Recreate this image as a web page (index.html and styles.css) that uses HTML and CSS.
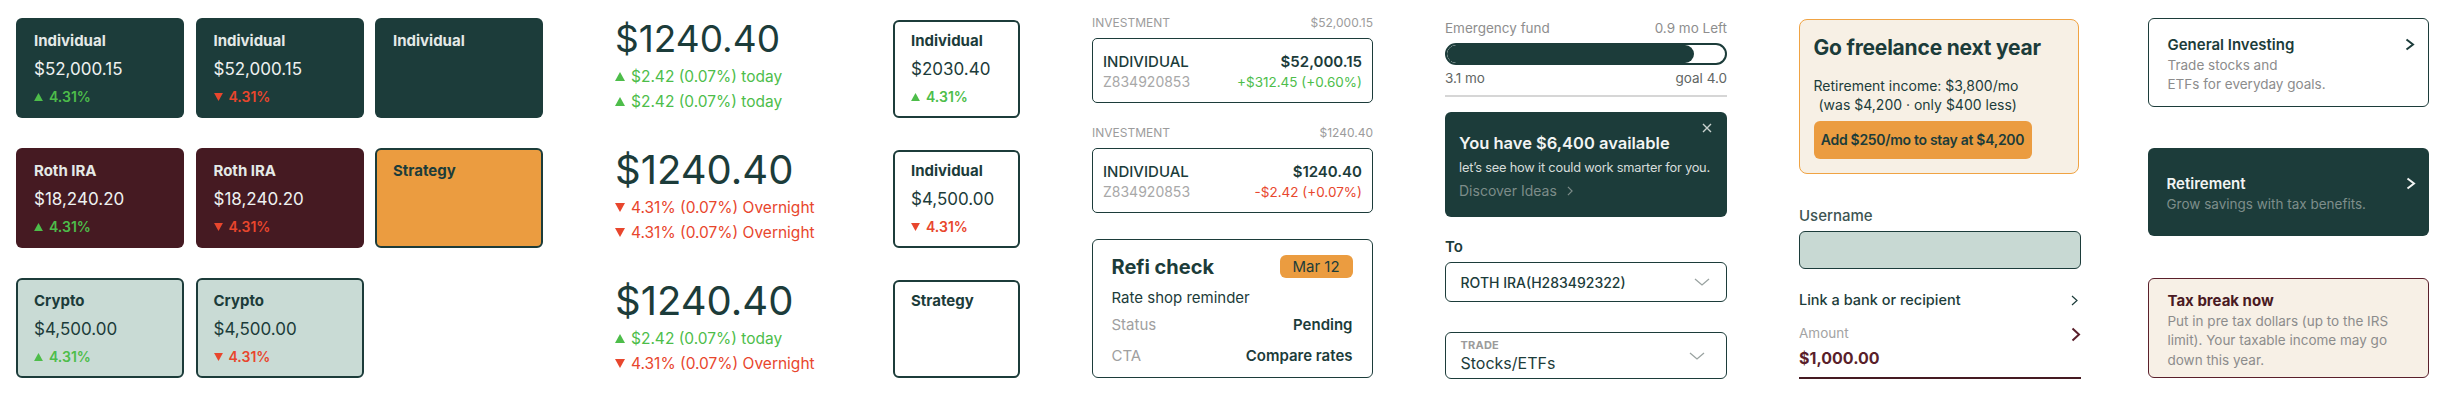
FILE: index.html
```html
<!DOCTYPE html>
<html lang="en">
<head>
<meta charset="utf-8">
<title>Finance UI components</title>
<link rel="stylesheet" href="styles.css">
</head>
<body>
<div class="page">

  <!-- Column 1: account tiles -->
  <section class="tiles">
    <div class="tile tile-dark">
      <div class="tile-title">Individual</div>
      <div class="tile-amount">$52,000.15</div>
      <div class="tile-change up"><svg class="tri" viewBox="0 0 10 9"><polygon points="5,0 10,9 0,9"/></svg>4.31%</div>
    </div>
    <div class="tile tile-dark">
      <div class="tile-title">Individual</div>
      <div class="tile-amount">$52,000.15</div>
      <div class="tile-change down"><svg class="tri" viewBox="0 0 10 9"><polygon points="0,0 10,0 5,9"/></svg>4.31%</div>
    </div>
    <div class="tile tile-dark">
      <div class="tile-title">Individual</div>
    </div>

    <div class="tile tile-maroon">
      <div class="tile-title">Roth IRA</div>
      <div class="tile-amount">$18,240.20</div>
      <div class="tile-change up"><svg class="tri" viewBox="0 0 10 9"><polygon points="5,0 10,9 0,9"/></svg>4.31%</div>
    </div>
    <div class="tile tile-maroon">
      <div class="tile-title">Roth IRA</div>
      <div class="tile-amount">$18,240.20</div>
      <div class="tile-change down"><svg class="tri" viewBox="0 0 10 9"><polygon points="0,0 10,0 5,9"/></svg>4.31%</div>
    </div>
    <div class="tile tile-orange">
      <div class="tile-title">Strategy</div>
    </div>

    <div class="tile tile-light">
      <div class="tile-title">Crypto</div>
      <div class="tile-amount">$4,500.00</div>
      <div class="tile-change up"><svg class="tri" viewBox="0 0 10 9"><polygon points="5,0 10,9 0,9"/></svg>4.31%</div>
    </div>
    <div class="tile tile-light">
      <div class="tile-title">Crypto</div>
      <div class="tile-amount">$4,500.00</div>
      <div class="tile-change down"><svg class="tri" viewBox="0 0 10 9"><polygon points="0,0 10,0 5,9"/></svg>4.31%</div>
    </div>
  </section>

  <!-- Column 2: big prices -->
  <section class="prices">
    <div class="price-block">
      <div class="price">$1240.40</div>
      <div class="sub up"><svg class="tri-lg" viewBox="0 0 10 9"><polygon points="5,0 10,9 0,9"/></svg>$2.42 (0.07%) today</div>
      <div class="sub up"><svg class="tri-lg" viewBox="0 0 10 9"><polygon points="5,0 10,9 0,9"/></svg>$2.42 (0.07%) today</div>
    </div>
    <div class="price-block">
      <div class="price price-lg">$1240.40</div>
      <div class="sub down"><svg class="tri-lg" viewBox="0 0 10 9"><polygon points="0,0 10,0 5,9"/></svg>4.31% (0.07%) Overnight</div>
      <div class="sub down"><svg class="tri-lg" viewBox="0 0 10 9"><polygon points="0,0 10,0 5,9"/></svg>4.31% (0.07%) Overnight</div>
    </div>
    <div class="price-block">
      <div class="price price-lg">$1240.40</div>
      <div class="sub up"><svg class="tri-lg" viewBox="0 0 10 9"><polygon points="5,0 10,9 0,9"/></svg>$2.42 (0.07%) today</div>
      <div class="sub down"><svg class="tri-lg" viewBox="0 0 10 9"><polygon points="0,0 10,0 5,9"/></svg>4.31% (0.07%) Overnight</div>
    </div>
  </section>

  <!-- Column 3: outline tiles -->
  <section class="otiles">
    <div class="otile">
      <div class="tile-title">Individual</div>
      <div class="tile-amount">$2030.40</div>
      <div class="tile-change up"><svg class="tri" viewBox="0 0 10 9"><polygon points="5,0 10,9 0,9"/></svg>4.31%</div>
    </div>
    <div class="otile">
      <div class="tile-title">Individual</div>
      <div class="tile-amount">$4,500.00</div>
      <div class="tile-change down"><svg class="tri" viewBox="0 0 10 9"><polygon points="0,0 10,0 5,9"/></svg>4.31%</div>
    </div>
    <div class="otile">
      <div class="tile-title">Strategy</div>
    </div>
  </section>

  <!-- Column 4: investment rows + refi card -->
  <section class="invest">
    <div class="inv-label"><span>INVESTMENT</span><span>$52,000.15</span></div>
    <div class="inv-card">
      <div class="inv-left">
        <div class="inv-name">INDIVIDUAL</div>
        <div class="inv-id">Z834920853</div>
      </div>
      <div class="inv-right">
        <div class="inv-amount">$52,000.15</div>
        <div class="inv-change up">+$312.45 (+0.60%)</div>
      </div>
    </div>
    <div class="inv-label second"><span>INVESTMENT</span><span>$1240.40</span></div>
    <div class="inv-card">
      <div class="inv-left">
        <div class="inv-name">INDIVIDUAL</div>
        <div class="inv-id">Z834920853</div>
      </div>
      <div class="inv-right">
        <div class="inv-amount">$1240.40</div>
        <div class="inv-change down">-$2.42 (+0.07%)</div>
      </div>
    </div>
    <div class="refi">
      <div class="refi-head">
        <span class="refi-title">Refi check</span>
        <span class="badge">Mar 12</span>
      </div>
      <div class="refi-row refi-desc">Rate shop reminder</div>
      <div class="refi-row refi-status"><span class="muted">Status</span><strong>Pending</strong></div>
      <div class="refi-row refi-cta"><span class="muted">CTA</span><strong>Compare rates</strong></div>
    </div>
  </section>

  <!-- Column 5: emergency fund, promo, selects -->
  <section class="fund">
    <div class="fund-row"><span>Emergency fund</span><span>0.9 mo Left</span></div>
    <div class="bar"><div class="bar-fill" style="width: 89%"></div></div>
    <div class="fund-row fund-scale"><span>3.1 mo</span><span>goal 4.0</span></div>
    <div class="divider"></div>
    <div class="promo">
      <svg class="close" viewBox="0 0 10 10"><path d="M1 1L9 9M9 1L1 9"/></svg>
      <div class="promo-title">You have $6,400 available</div>
      <div class="promo-sub">let’s see how it could work smarter for you.</div>
      <div class="promo-link">Discover Ideas <svg class="link-chev" viewBox="0 0 7 12"><path d="M1 1L6 6L1 11"/></svg></div>
    </div>
    <div class="to-label">To</div>
    <div class="select">
      <span class="select-value">ROTH IRA(H283492322)</span>
      <svg class="chev-down" viewBox="0 0 16 8"><path d="M1 1L8 7L15 1"/></svg>
    </div>
    <div class="select select-trade">
      <div class="select-stack">
        <span class="select-cap">TRADE</span>
        <span class="select-big">Stocks/ETFs</span>
      </div>
      <svg class="chev-down" viewBox="0 0 16 8"><path d="M1 1L8 7L15 1"/></svg>
    </div>
  </section>

  <!-- Column 6: freelance + form -->
  <section class="form-col">
    <div class="freelance">
      <div class="fl-title">Go freelance next year</div>
      <div class="fl-line fl-first">Retirement income: $3,800/mo</div>
      <div class="fl-line fl-indent">(was $4,200 · only $400 less)</div>
      <div class="fl-btn">Add $250/mo to stay at $4,200</div>
    </div>
    <div class="field-label">Username</div>
    <div class="input"></div>
    <div class="link-row"><span>Link a bank or recipient</span><svg class="chev-sm" viewBox="0 0 7 11"><path d="M1 1L6 5.5L1 10"/></svg></div>
    <div class="amount">
      <div class="amount-text">
        <div class="amount-label">Amount</div>
        <div class="amount-value">$1,000.00</div>
      </div>
      <svg class="chev-amount" viewBox="0 0 10 15"><path d="M1.5 1.5L8 7.5L1.5 13.5"/></svg>
    </div>
  </section>

  <!-- Column 7: option cards -->
  <section class="options">
    <div class="opt opt-white">
      <div class="opt-head"><span class="opt-title">General Investing</span><svg class="opt-chev" viewBox="0 0 10 13"><path d="M1.5 1.5L8 6.5L1.5 11.5"/></svg></div>
      <div class="opt-desc">Trade stocks and<br>ETFs for everyday goals.</div>
    </div>
    <div class="opt opt-dark">
      <div class="opt-head"><span class="opt-title">Retirement</span><svg class="opt-chev" viewBox="0 0 10 13"><path d="M1.5 1.5L8 6.5L1.5 11.5"/></svg></div>
      <div class="opt-desc">Grow savings with tax benefits.</div>
    </div>
    <div class="opt opt-tax">
      <div class="opt-head"><span class="opt-title">Tax break now</span></div>
      <div class="opt-desc">Put in pre tax dollars (up to the IRS limit). Your taxable income may go down this year.</div>
    </div>
  </section>

</div>
</body>
</html>
```

FILE: styles.css
```css
* { box-sizing: border-box; }

body {
  margin: 0;
  background: #ffffff;
  font-family: Inter, "Noto Sans", "Liberation Sans", sans-serif;
  color: #1c3c3a;
}

.page {
  display: flex;
  align-items: flex-start;
  gap: 72px;
  padding-left: 16px;
  width: 2458px;
  height: 408px;
}

.up { color: #4dbd4a; }
.down { color: #e8462d; }

/* ---------- Column 1: tiles ---------- */
.tiles {
  flex: none;
  width: 527px;
  margin-top: 18px;
  display: grid;
  grid-template-columns: repeat(3, 168px);
  column-gap: 11.5px;
  grid-auto-rows: 100px;
  row-gap: 30px;
}

.tile {
  border-radius: 6px;
  padding: 9px 0 0 18px;
}

.tile-title {
  font-size: 15px;
  font-weight: 700;
  line-height: 28px;
}

.tile-amount {
  font-size: 17px;
  line-height: 28px;
}

.tile-change {
  display: flex;
  align-items: center;
  gap: 6px;
  font-size: 14px;
  font-weight: 600;
  line-height: 28px;
}

.tri {
  width: 9px;
  height: 8px;
  fill: currentColor;
}

.tile-dark { background: #1c3c3a; }
.tile-maroon { background: #451a22; }
.tile-dark .tile-title,
.tile-maroon .tile-title { color: #e4e9e7; }
.tile-dark .tile-amount,
.tile-maroon .tile-amount { color: #eef1f0; }

.tile-light {
  background: #c9dbd5;
  border: 2px solid #1c3c3a;
  padding: 7px 0 0 16px;
}

.tile-orange {
  background: #eb9c40;
  border: 2px solid #1c3c3a;
  padding: 7px 0 0 16px;
}

/* ---------- Column 2: prices ---------- */
.prices {
  flex: none;
  width: 206px;
  margin-top: 16px;
  display: flex;
  flex-direction: column;
  gap: 33px;
}

.price {
  font-size: 37px;
  line-height: 46px;
  margin-bottom: 2px;
  white-space: nowrap;
}

.price-lg { font-size: 40px; }

.sub {
  display: flex;
  align-items: center;
  gap: 6px;
  font-size: 15.5px;
  line-height: 25px;
  white-space: nowrap;
}

.tri-lg {
  width: 10px;
  height: 9px;
  fill: currentColor;
}

/* ---------- Column 3: outline tiles ---------- */
.otiles {
  flex: none;
  width: 127px;
  margin-top: 20px;
  display: flex;
  flex-direction: column;
  gap: 32px;
}

.otile {
  height: 98px;
  border: 2px solid #1c3c3a;
  border-radius: 6px;
  padding: 5px 0 0 16px;
}

/* ---------- Column 4: investments ---------- */
.invest {
  flex: none;
  width: 281px;
  padding-top: 14px;
}

.inv-label {
  display: flex;
  justify-content: space-between;
  font-size: 12px;
  line-height: 18px;
  color: #9c9c9c;
}

.inv-label.second { margin-top: 21px; }

.inv-card {
  margin-top: 6px;
  height: 65px;
  border: 1.5px solid #1c3c3a;
  border-radius: 5px;
  padding: 12.5px 10px 0 10px;
  display: flex;
  justify-content: space-between;
}

.inv-name {
  font-size: 15px;
  font-weight: 500;
  line-height: 20px;
}

.inv-id {
  font-size: 14px;
  line-height: 20px;
  color: #a8a8a8;
}

.inv-right { text-align: right; }

.inv-amount {
  font-size: 15px;
  font-weight: 600;
  line-height: 20px;
}

.inv-change {
  font-size: 13.5px;
  line-height: 20px;
}

.refi {
  margin-top: 26px;
  height: 139px;
  border: 1.5px solid #1c3c3a;
  border-radius: 6px;
  padding: 12.5px 19.5px 0 18.5px;
}

.refi-head {
  display: flex;
  justify-content: space-between;
  align-items: center;
  height: 28px;
}

.refi-title {
  font-size: 20px;
  font-weight: 700;
}

.badge {
  background: #eb9c40;
  border-radius: 6px;
  font-size: 15px;
  line-height: 23px;
  padding: 0 10px;
  width: 73px;
  text-align: center;
  color: #1c3c3a;
}

.refi-row {
  display: flex;
  justify-content: space-between;
  font-size: 15px;
  line-height: 24px;
}

.refi-desc { margin-top: 5px; }
.refi-status { margin-top: 3px; }
.refi-cta { margin-top: 7px; }

.refi-row strong { font-weight: 600; }
.muted { color: #a0a0a0; }

/* ---------- Column 5: fund ---------- */
.fund {
  flex: none;
  width: 282px;
  padding-top: 19px;
}

.fund-row {
  display: flex;
  justify-content: space-between;
  font-size: 13.5px;
  line-height: 18px;
  color: #8e8e8e;
}

.bar {
  margin-top: 6px;
  height: 22px;
  border: 2px solid #1c3c3a;
  border-radius: 11px;
  background: #ffffff;
  overflow: hidden;
}

.bar-fill {
  height: 100%;
  background: #1c3c3a;
  border-radius: 10px;
}

.fund-scale {
  margin-top: 4px;
  color: #5f6664;
}

.divider {
  margin-top: 8px;
  height: 2px;
  background: #d6d6d6;
}

.promo {
  position: relative;
  margin-top: 15px;
  height: 105px;
  background: #1c3c3a;
  border-radius: 6px;
  padding: 20px 14px 0 14px;
}

.close {
  position: absolute;
  top: 11px;
  right: 15px;
  width: 10px;
  height: 10px;
  stroke: #c9d2cf;
  stroke-width: 1.4;
  fill: none;
}

.promo-title {
  font-size: 16.5px;
  font-weight: 600;
  line-height: 22px;
  color: #f2f4f3;
}

.promo-sub {
  margin-top: 4px;
  font-size: 12.8px;
  letter-spacing: -0.2px;
  line-height: 20px;
  color: #d6dddb;
  white-space: nowrap;
}

.promo-link {
  margin-top: 3px;
  display: flex;
  align-items: center;
  gap: 10px;
  font-size: 14px;
  line-height: 20px;
  color: #7d8c89;
}

.link-chev {
  width: 6px;
  height: 10px;
  stroke: #7d8c89;
  stroke-width: 1.4;
  fill: none;
}

.to-label {
  margin-top: 20px;
  font-size: 15px;
  font-weight: 600;
  line-height: 20px;
}

.select {
  margin-top: 5px;
  height: 40px;
  border: 1.5px solid #1c3c3a;
  border-radius: 6px;
  padding: 0 16px 0 14.5px;
  display: flex;
  align-items: center;
  justify-content: space-between;
}

.select-value {
  font-size: 14px;
  font-weight: 500;
}

.chev-down {
  width: 16px;
  height: 8px;
  stroke: #9aa3a1;
  stroke-width: 1.3;
  fill: none;
}

.select-trade {
  margin-top: 30px;
  height: 47px;
  padding-right: 21px;
}

.select-stack {
  display: flex;
  flex-direction: column;
}

.select-cap {
  font-size: 11px;
  font-weight: 700;
  line-height: 14px;
  color: #9b9b9b;
  letter-spacing: 0.2px;
}

.select-big {
  font-size: 16px;
  line-height: 22px;
}

/* ---------- Column 6: form ---------- */
.form-col {
  flex: none;
  width: 282px;
  padding-top: 19px;
}

.freelance {
  width: 280px;
  height: 155px;
  background: #f7f0e5;
  border: 1.5px solid #f0a343;
  border-radius: 8px;
  padding: 13.5px 14px 0 13.5px;
}

.fl-title {
  font-size: 21px;
  font-weight: 700;
  line-height: 28px;
  letter-spacing: -0.2px;
}

.fl-line {
  font-size: 14px;
  line-height: 19px;
}

.fl-first { margin-top: 14.5px; }
.fl-indent { padding-left: 5px; }

.fl-btn {
  margin-top: 6.5px;
  height: 38px;
  width: 218px;
  background: #eb9c40;
  border-radius: 6px;
  font-size: 14px;
  font-weight: 600;
  letter-spacing: -0.3px;
  line-height: 38px;
  text-align: center;
  white-space: nowrap;
}

.field-label {
  margin-top: 33px;
  font-size: 15px;
  font-weight: 500;
  line-height: 18px;
  color: #3d5452;
}

.input {
  margin-top: 6px;
  height: 38px;
  background: #c8d9d3;
  border: 1.5px solid #1c3c3a;
  border-radius: 6px;
}

.link-row {
  margin-top: 21px;
  display: flex;
  justify-content: space-between;
  align-items: center;
  font-size: 14.5px;
  font-weight: 500;
  line-height: 20px;
  padding-right: 3px;
}

.chev-sm {
  width: 7px;
  height: 11px;
  stroke: #1c3c3a;
  stroke-width: 1.2;
  fill: none;
}

.amount {
  margin-top: 14px;
  display: flex;
  justify-content: space-between;
  align-items: flex-start;
  padding-bottom: 9px;
  border-bottom: 2px solid #451a22;
}

.amount-label {
  font-size: 13.5px;
  line-height: 18px;
  color: #a3a3a3;
}

.amount-value {
  margin-top: 6px;
  font-size: 16px;
  font-weight: 700;
  line-height: 20px;
  color: #5a1f2b;
}

.chev-amount {
  margin-top: 3px;
  width: 10px;
  height: 15px;
  stroke: #5a1f2b;
  stroke-width: 2;
  fill: none;
}

/* ---------- Column 7: options ---------- */
.options {
  flex: none;
  width: 281px;
  margin-left: -5px;
  margin-top: 18px;
}

.opt {
  border-radius: 6px;
  padding: 0 13px 0 18.5px;
}

.opt-head {
  display: flex;
  justify-content: space-between;
  align-items: center;
}

.opt-title {
  font-size: 15px;
  font-weight: 600;
}

.opt-chev {
  width: 10px;
  height: 13px;
  stroke-width: 2;
  fill: none;
}

.opt-desc {
  font-size: 13.5px;
  line-height: 19px;
  color: #8c8c8c;
}

.opt-white {
  height: 89px;
  border: 1.5px solid #1c3c3a;
  padding-top: 13.5px;
}

.opt-white .opt-head { height: 23px; }
.opt-white .opt-chev { stroke: #1c3c3a; }

.opt-dark {
  margin-top: 41px;
  height: 88px;
  background: #1c3c3a;
  padding-top: 24px;
}

.opt-dark .opt-head { height: 22px; }
.opt-dark .opt-title { color: #f2f4f3; }
.opt-dark .opt-chev { stroke: #f2f4f3; }
.opt-dark .opt-desc {
  line-height: 20px;
  color: #7e8e8b;
}

.opt-tax {
  margin-top: 42px;
  height: 100px;
  background: #f7f0e6;
  border: 1.5px solid #5a1f2b;
  padding-top: 10.5px;
  padding-right: 30px;
}

.opt-tax .opt-head { height: 22px; }
.opt-tax .opt-title {
  color: #4a1a23;
  font-weight: 700;
}
.opt-tax .opt-desc { line-height: 19.5px; }
```
